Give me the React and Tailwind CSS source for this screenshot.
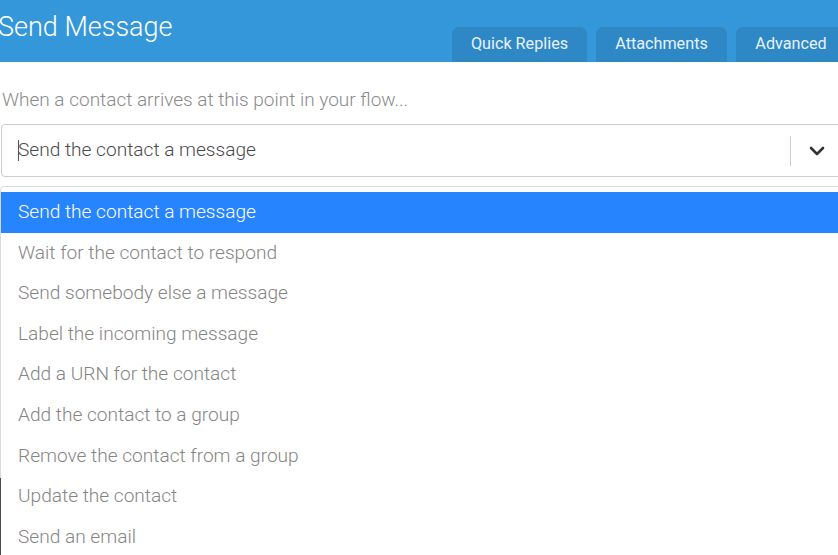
import React from 'react';

const tabs = [
  { label: 'Quick Replies', w: 'w-[135px]' },
  { label: 'Attachments', w: 'w-[131px]' },
  { label: 'Advanced', w: 'w-[110px]' },
];

const options = [
  'Send the contact a message',
  'Wait for the contact to respond',
  'Send somebody else a message',
  'Label the incoming message',
  'Add a URN for the contact',
  'Add the contact to a group',
  'Remove the contact from a group',
  'Update the contact',
  'Send an email',
];

export default function App() {
  return (
    <div className="relative w-[838px] h-[555px] overflow-hidden bg-white font-['Roboto',sans-serif] font-light">
      {/* Header */}
      <div className="h-[62px] bg-[#3497da] flex items-stretch justify-between">
        <div className="-ml-[2px] pt-[10px] text-[27px] leading-[34px] text-white">Send Message</div>
        <div className="flex items-end gap-[9px] -mr-[8px]">
          {tabs.map((t) => (
            <div
              key={t.label}
              className={`${t.w} h-[35px] rounded-t-[7px] bg-[#2f88c6] flex items-center justify-center text-[16.2px] font-normal text-[#e8f2fb]`}
            >
              {t.label}
            </div>
          ))}
        </div>
      </div>

      {/* Body */}
      <div className="pl-[1px]">
        <div className="pt-[26px] pl-[1px] text-[19px] leading-[24px] text-[#8a8a8a]">
          When a contact arrives at this point in your flow...
        </div>

        <div className="mt-[12px] -mr-[10px] h-[53px] border border-[#cccccc] rounded-[4px] flex items-center">
          <div className="flex-1 pl-[16px] flex items-center text-[19.1px] text-[#4a4a4a]">
            <span className="w-[1px] h-[21px] bg-[#555555] -mr-[1px]" />
            Send the contact a message
          </div>
          <div className="w-[1px] h-[30px] bg-[#cccccc]" />
          <div className="w-[56px] flex items-center justify-center pr-[4px]">
            <svg width="16" height="10" viewBox="0 0 16 10">
              <path d="M2 2 L8 8 L14 2" fill="none" stroke="#333" strokeWidth="2.6" strokeLinecap="round" strokeLinejoin="round" />
            </svg>
          </div>
        </div>

        <div className="mt-[9px] -mr-[10px] border border-[#d9d9d9] rounded-[4px] pt-[5px] -ml-[1px]">
          {options.map((o, i) => (
            <div
              key={o}
              className={
                i === 0
                  ? 'h-[40.6px] flex items-center pl-[17px] bg-[#2684ff] text-white text-[19.1px]'
                  : 'h-[40.6px] flex items-center pl-[17px] text-[#858585] text-[19.1px]'
              }
            >
              {o}
            </div>
          ))}
        </div>
      </div>

      {/* dark edge of the panel behind */}
      <div className="absolute left-0 top-[478px] w-[1px] h-[77px] bg-[#4a4a4a]" />
    </div>
  );
}
